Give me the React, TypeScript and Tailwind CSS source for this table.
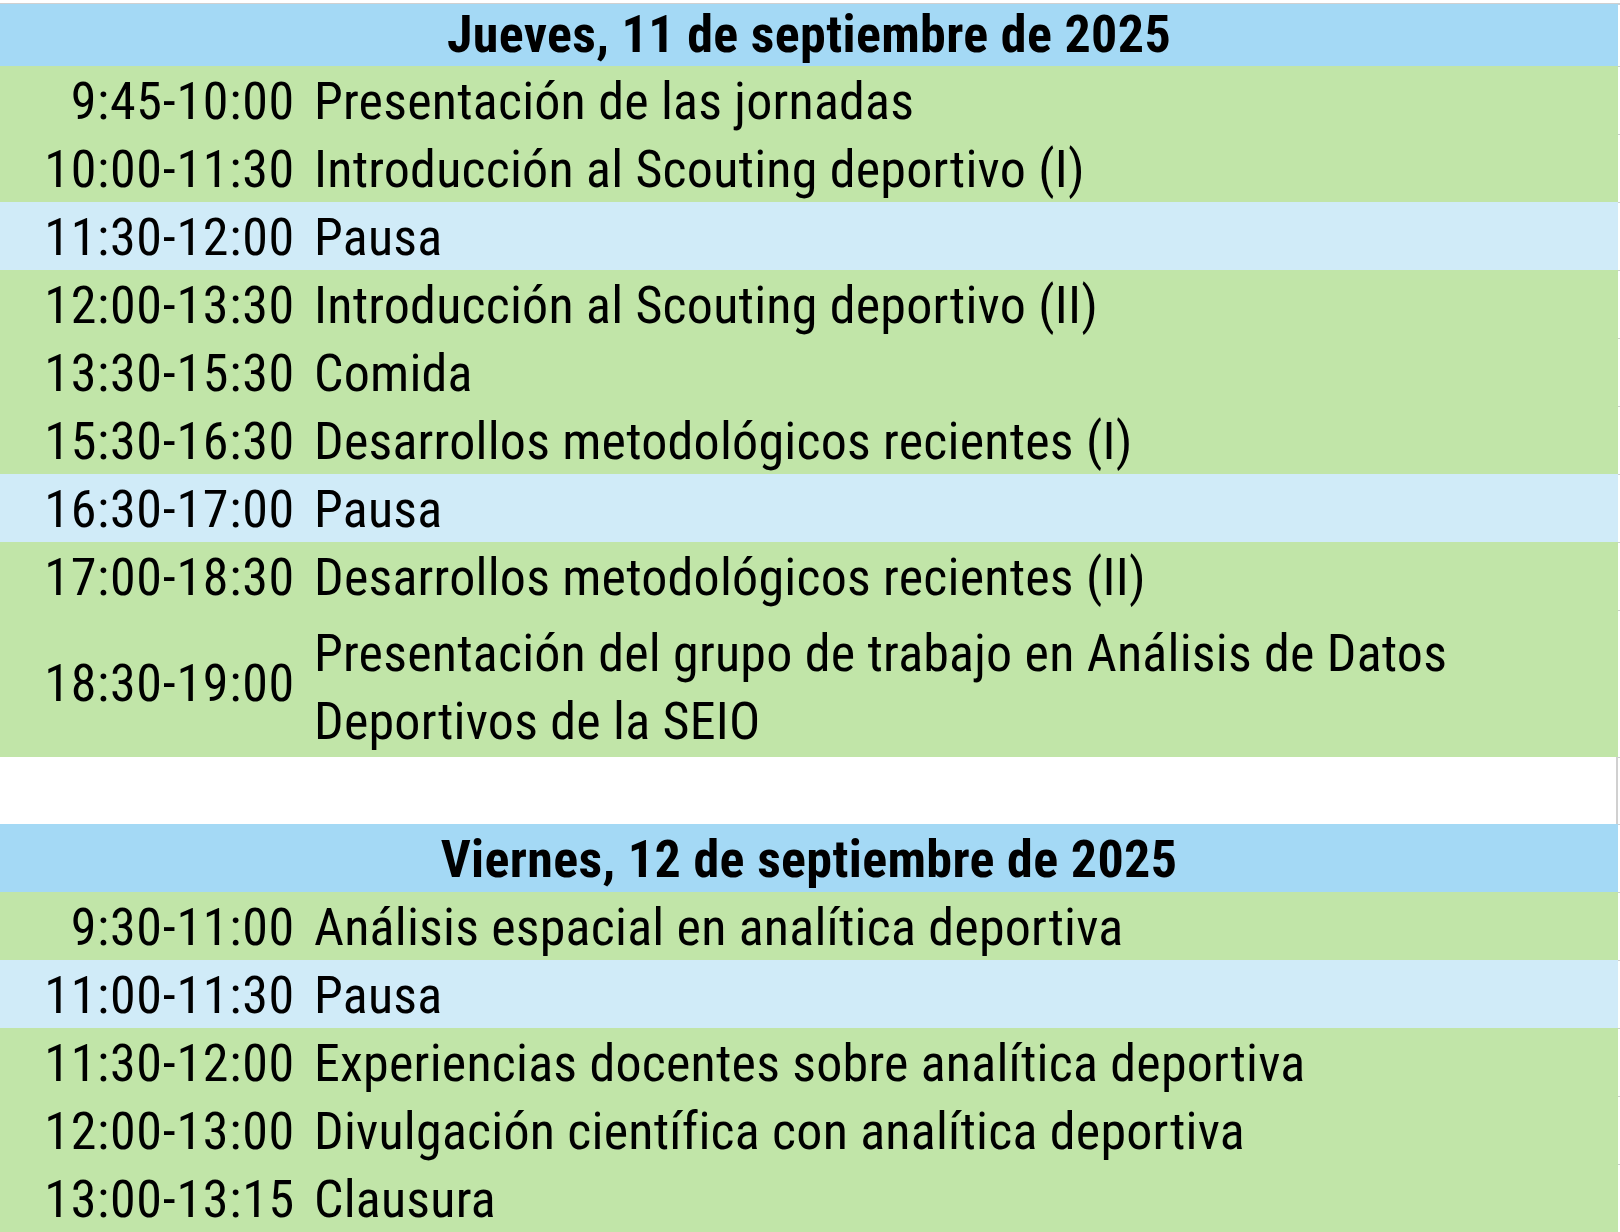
import React from "react";

type Item = { t: string; d: string[]; pause?: boolean };

const day1: Item[] = [
  { t: "9:45-10:00", d: ["Presentación de las jornadas"] },
  { t: "10:00-11:30", d: ["Introducción al Scouting deportivo (I)"] },
  { t: "11:30-12:00", d: ["Pausa"], pause: true },
  { t: "12:00-13:30", d: ["Introducción al Scouting deportivo (II)"] },
  { t: "13:30-15:30", d: ["Comida"] },
  { t: "15:30-16:30", d: ["Desarrollos metodológicos recientes (I)"] },
  { t: "16:30-17:00", d: ["Pausa"], pause: true },
  { t: "17:00-18:30", d: ["Desarrollos metodológicos recientes (II)"] },
  {
    t: "18:30-19:00",
    d: ["Presentación del grupo de trabajo en Análisis de Datos", "Deportivos de la SEIO"],
  },
];

const day2: Item[] = [
  { t: "9:30-11:00", d: ["Análisis espacial en analítica deportiva"] },
  { t: "11:00-11:30", d: ["Pausa"], pause: true },
  { t: "11:30-12:00", d: ["Experiencias docentes sobre analítica deportiva"] },
  { t: "12:00-13:00", d: ["Divulgación científica con analítica deportiva"] },
  { t: "13:00-13:15", d: ["Clausura"] },
];

function Tick({ h, line = true }: { h: string; line?: boolean }) {
  return (
    <div className={`w-[2px] shrink-0 ${h} ${line ? "border-t border-[#d0d0d0]" : ""}`} />
  );
}

function Header({ text, h, pad }: { text: string; h: string; pad: string }) {
  return (
    <div className="flex">
      <div
        className={`w-[1618px] ${h} ${pad} bg-[#a4d9f5] text-center font-bold text-[52px] tracking-[0.35px] text-black whitespace-nowrap`}
      >
        {text}
      </div>
      <Tick h={h} />
    </div>
  );
}

function Row({ it }: { it: Item }) {
  const double = it.d.length > 1;
  const bg = it.pause ? "bg-[#d0ebf8]" : "bg-[#c1e5a8]";
  return (
    <div className="flex">
      <div
        className={`w-[1618px] flex ${bg} ${double ? "h-[147px]" : "h-[68px]"} text-black text-[52px]`}
      >
        <div
          className={`w-[305px] shrink-0 pr-[10px] text-right tracking-[0.75px] whitespace-nowrap ${
            double ? "flex items-center justify-end leading-[64px]" : "pt-[4px] leading-[64px]"
          }`}
        >
          {it.t}
        </div>
        <div
          className={`pl-[9px] tracking-[0.22px] whitespace-nowrap ${
            double ? "pt-[10px] leading-[68px]" : "pt-[4px] leading-[64px]"
          }`}
        >
          {it.d.map((l, i) => (
            <div key={i}>{l}</div>
          ))}
        </div>
      </div>
      <Tick h={double ? "h-[147px]" : "h-[68px]"} />
    </div>
  );
}

export default function App() {
  return (
    <div className="w-[1620px] h-[1232px] overflow-hidden bg-white font-['Roboto_Condensed',_'Liberation_Sans_Narrow',_sans-serif]">
      <div className="h-[3px]" />
      <div className="h-px w-[1620px] bg-[#d0d0d0]" />
      <Header text="Jueves, 11 de septiembre de 2025" h="h-[62px]" pad="leading-[62px]" />
      {day1.map((it, i) => (
        <Row key={i} it={it} />
      ))}
      <div className="flex">
        <div className="w-[1618px] h-[67px] bg-white border-r-2 border-[#d0d0d0]" />
        <Tick h="h-[67px]" />
      </div>
      <Header
        text="Viernes, 12 de septiembre de 2025"
        h="h-[68px]"
        pad="pt-[4px] leading-[64px]"
      />
      {day2.map((it, i) => (
        <Row key={i} it={it} />
      ))}
    </div>
  );
}
